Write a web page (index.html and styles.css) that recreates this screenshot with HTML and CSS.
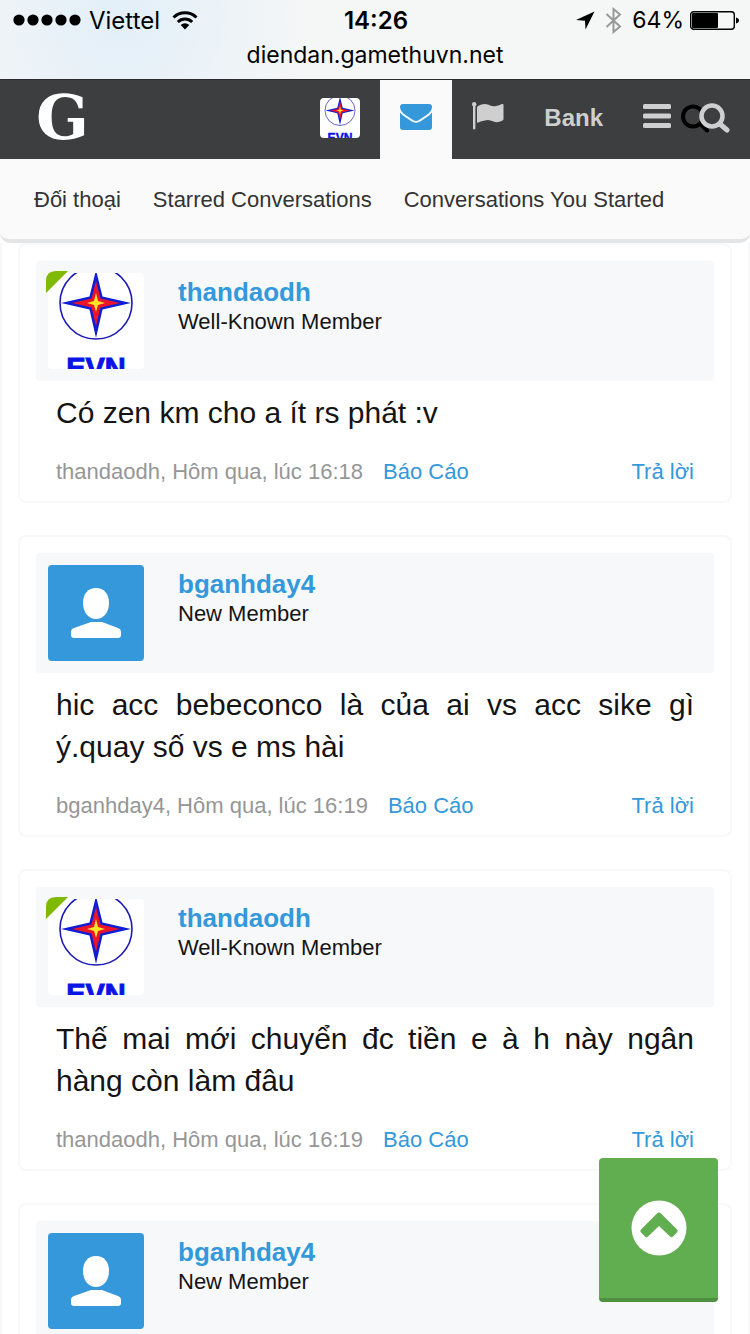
FILE: index.html
```html
<!DOCTYPE html>
<html lang="vi">
<head>
    <meta charset="UTF-8">
    <meta name="viewport" content="width=device-width, initial-scale=1.0">
    <title>Đối thoại - diendan.gamethuvn.net</title>
    <link rel="stylesheet" href="styles.css">
</head>
<body>
    <svg class="defs" aria-hidden="true">
        <symbol id="evn" viewBox="0 0 96 96">
            <rect width="96" height="96" fill="#fff"/>
            <circle cx="48" cy="30" r="36" fill="none" stroke="#1a1ab4" stroke-width="1.600"/>
            <path d="M48-3 54.500 23.500 83 30 54.500 36.500 48 65 41.500 36.500 13 30 41.500 23.500Z" fill="#0f1ed2"/>
            <path d="M48 8 52.500 25.500 72 30 52.500 34.500 48 53 43.500 34.500 24 30 43.500 25.500Z" fill="#eb1428"/>
            <path d="M48 20 50 28 57 30 50 32 48 39 46 32 39 30 46 28Z" fill="#ffe628"/>
            <text x="48" y="105" text-anchor="middle" class="evn-text">EVN</text>
        </symbol>
        <symbol id="user" viewBox="0 0 96 96">
            <rect width="96" height="96" fill="#3498db"/>
            <path d="M48 23c8 0 13 6 13 15 0 10-6 16-13 16s-13-6-13-16c0-9 5-15 13-15Z" fill="#fff"/>
            <path d="M43 57h11l16 6q3 1 3 4v3q0 3-3 3H26q-3 0-3-3v-3q0-3 3-4Z" fill="#fff"/>
        </symbol>
    </svg>

    <div class="status-bar">
        <div class="status-row">
            <div class="status-left">
                <svg width="68" height="12" viewBox="0 0 68 12"><circle cx="6" cy="6" r="5.6"/><circle cx="20" cy="6" r="5.6"/><circle cx="34" cy="6" r="5.6"/><circle cx="48" cy="6" r="5.6"/><circle cx="62" cy="6" r="5.6"/></svg>
                <span>Viettel</span>
                <svg class="wifi" width="26" height="19" viewBox="0 0 26 19"><path d="M1.5 6.5a16.5 16.5 0 0 1 23 0M5.8 11a10.3 10.3 0 0 1 14.4 0" fill="none" stroke="#000" stroke-width="3"/><path d="M13 18.500 8.700 14a6.200 6.200 0 0 1 8.600 0Z"/></svg>
            </div>
            <div class="status-time">14:26</div>
            <div class="status-right">
                <svg width="19" height="19" viewBox="0 0 19 19"><path d="M18.500.5 9.500 18.500 9 9.700 0 9Z"/></svg>
                <svg class="bluetooth" width="17" height="27" viewBox="0 0 17 27"><path d="M1.500 7 15 19.500 8.500 25V2L15 7.500 1.500 20" fill="none" stroke="#999" stroke-width="2"/></svg>
                <span>64%</span>
                <svg class="battery" width="49" height="19" viewBox="0 0 49 19"><rect x=".7" y=".7" width="43.600" height="17.600" rx="3" fill="none" stroke="#000" stroke-width="1.4"/><rect x="2" y="2" width="26" height="15" rx="1"/><path d="M46 6.500c4 1 4 5 0 6Z"/></svg>
            </div>
        </div>
        <div class="status-url">diendan.gamethuvn.net</div>
    </div>

    <nav class="navbar">
        <a href="#" class="logo">G</a>
        <a href="#" class="nav-tab" aria-label="thandaodh"><svg class="nav-avatar"><use href="#evn"/></svg></a>
        <a href="#" class="nav-tab selected" aria-label="Đối thoại">
            <svg width="32" height="26" viewBox="0 0 32 26" fill="#3498db"><path d="M3 0h26q3 0 3 3c0 3-2 5-4 7l-9 6q-3 2-6 0L4 10C2 8 0 6 0 3Q0 0 3 0Z"/><path d="M0 8.500q1 1.500 3 3l8 5.500q5 3.500 10 0l8-5.500q2-1.500 3-3V23q0 3-3 3H3q-3 0-3-3Z"/></svg>
        </a>
        <a href="#" class="nav-tab flag" aria-label="Flag">
            <svg width="32" height="28" viewBox="0 0 32 28" fill="#cfcfcf"><circle cx="2.200" cy="2.200" r="2.200"/><path d="M1 3h2.400v23.500q0 1-1.200 1T1 26.500Z"/><path d="M5 5.500q0-1 1-1.500 5-3 10-1.500 4 2.500 8 1.500 3-.5 6-2 1.500-.5 1.500 1v14q0 1-1 1.500-5 3-9 1-5-2.500-8.500-1Q9 19.200 6.500 20.500 5 21 5 20Z"/></svg>
        </a>
        <a href="#" class="nav-tab bank">Bank</a>
        <button type="button" class="menu-btn" aria-label="Menu">
            <svg width="28" height="24" viewBox="0 0 28 24" fill="#cfcfcf"><rect width="28" height="5" rx="1.500"/><rect y="9.500" width="28" height="5" rx="1.500"/><rect y="19" width="28" height="5" rx="1.500"/></svg>
        </button>
        <button type="button" class="search-btn" aria-label="Search">
            <svg width="49" height="30" viewBox="0 0 49 30" fill="none" stroke-linecap="round"><g stroke="#000" stroke-width="4"><circle cx="12" cy="13.500" r="10"/><path d="m20 21.500 6 6"/></g><circle cx="31" cy="13" r="10.500" stroke="#cfcfcf" stroke-width="4.500" fill="#3d3e40"/><path d="m39 21 7 6" stroke="#cfcfcf" stroke-width="5"/></svg>
        </button>
    </nav>

    <div class="sub-nav">
        <a href="#">Đối thoại</a>
        <a href="#">Starred Conversations</a>
        <a href="#">Conversations You Started</a>
    </div>

    <main class="messages">
        <article class="message">
            <header class="message-user">
                <div class="avatar">
                    <svg class="avatar-img"><use href="#evn"/></svg>
                    <svg class="online" width="22" height="22" viewBox="0 0 22 22"><path d="M0 22V10Q0 0 10 0H22Z" fill="#7fb900"/></svg>
                </div>
                <div class="user-info">
                    <a href="#" class="username">thandaodh</a>
                    <div class="user-title">Well-Known Member</div>
                </div>
            </header>
            <p class="message-text">Có zen km cho a ít rs phát :v</p>
            <footer class="message-meta">
                <span>thandaodh, Hôm qua, lúc 16:18</span>
                <a href="#">Báo Cáo</a>
                <a href="#" class="reply">Trả lời</a>
            </footer>
        </article>

        <article class="message">
            <header class="message-user">
                <div class="avatar">
                    <svg class="avatar-img"><use href="#user"/></svg>
                </div>
                <div class="user-info">
                    <a href="#" class="username">bganhday4</a>
                    <div class="user-title">New Member</div>
                </div>
            </header>
            <p class="message-text">hic acc bebeconco là của ai vs acc sike gì ý.quay số vs e ms hài</p>
            <footer class="message-meta">
                <span>bganhday4, Hôm qua, lúc 16:19</span>
                <a href="#">Báo Cáo</a>
                <a href="#" class="reply">Trả lời</a>
            </footer>
        </article>

        <article class="message">
            <header class="message-user">
                <div class="avatar">
                    <svg class="avatar-img"><use href="#evn"/></svg>
                    <svg class="online" width="22" height="22" viewBox="0 0 22 22"><path d="M0 22V10Q0 0 10 0H22Z" fill="#7fb900"/></svg>
                </div>
                <div class="user-info">
                    <a href="#" class="username">thandaodh</a>
                    <div class="user-title">Well-Known Member</div>
                </div>
            </header>
            <p class="message-text">Thế mai mới chuyển đc tiền e à h này ngân hàng còn làm đâu</p>
            <footer class="message-meta">
                <span>thandaodh, Hôm qua, lúc 16:19</span>
                <a href="#">Báo Cáo</a>
                <a href="#" class="reply">Trả lời</a>
            </footer>
        </article>

        <article class="message">
            <header class="message-user">
                <div class="avatar">
                    <svg class="avatar-img"><use href="#user"/></svg>
                </div>
                <div class="user-info">
                    <a href="#" class="username">bganhday4</a>
                    <div class="user-title">New Member</div>
                </div>
            </header>
        </article>
    </main>

    <button type="button" class="to-top" aria-label="Top">
        <svg width="56" height="56" viewBox="0 0 56 56"><circle cx="28" cy="28" r="27.500" fill="#fff"/><path d="M26 13.500q2-2 4 0L46 29.500q1.500 1.500 0 3L42 36.500q-1.500 1.500-3 0L28 26 17 36.500q-1.500 1.500-3 0L10 32.500q-1.500-1.500 0-3Z" fill="#61ae50"/></svg>
    </button>
</body>
</html>
```
FILE: styles.css
```css
* {
    box-sizing: border-box;
}

body {
    margin: 0;
    height: 100vh;
    overflow: hidden;
    display: flex;
    flex-direction: column;
    background-color: #ffffff;
    color: #141414;
    font-family: "Liberation Sans", Arial, sans-serif;
    font-size: 22px;
}

a {
    color: #3498db;
    text-decoration: none;
}

button {
    border: none;
    padding: 0;
    background: none;
    cursor: pointer;
}

svg {
    display: block;
    flex-shrink: 0;
}

.defs {
    position: absolute;
    width: 0;
    height: 0;
}

.evn-text {
    font-family: "Liberation Sans", Arial, sans-serif;
    font-size: 29px;
    font-weight: bold;
    fill: #0a14e6;
    stroke: #0a14e6;
    stroke-width: 1px;
}

/* Status bar */
.status-bar {
    flex-shrink: 0;
    height: 80px;
    border-bottom: 1px solid #2b2b2d;
    background: radial-gradient(circle at 16% 20%, #e2eff9, #f5f6f6 30%);
    color: #000000;
    font-family: Inter, "Liberation Sans", sans-serif;
    font-size: 24px;
}

.status-row {
    display: grid;
    grid-template-columns: 1fr auto 1fr;
    align-items: center;
    height: 40px;
    padding: 0 11px 0 13px;
}

.status-left,
.status-right {
    display: flex;
    align-items: center;
    gap: 8px;
}

.status-right {
    justify-content: flex-end;
    gap: 6px;
}

.wifi {
    margin-left: 4px;
}

.bluetooth {
    margin: 0 4px;
}

.status-right span {
    font-size: 23px;
}

.status-time {
    font-weight: 600;
}

.status-url {
    text-align: center;
    font-size: 23px;
    line-height: 30px;
}

/* Navbar */
.navbar {
    flex-shrink: 0;
    display: flex;
    height: 79px;
    padding-right: 20px;
    background-color: #3d3e40;
}

.logo {
    margin-right: auto;
    padding-left: 36px;
    color: #ffffff;
    font-family: "DejaVu Serif", serif;
    font-size: 62px;
    font-weight: bold;
    line-height: 75px;
}

.nav-tab,
.menu-btn,
.search-btn {
    display: flex;
    align-items: center;
    padding: 0 20px 4px;
}

.nav-tab {
    color: #cfcfcf;
}

.nav-tab.selected {
    padding-bottom: 6px;
    background-color: #fafafa;
}

.nav-tab.flag {
    padding-bottom: 8px;
}

.nav-tab.bank {
    font-size: 24px;
    font-weight: bold;
}

.nav-avatar {
    width: 40px;
    height: 40px;
    border-radius: 4px;
}

.menu-btn {
    padding: 0 10px 8px 20px;
}

.search-btn {
    padding: 0;
    padding-bottom: 4px;
}

/* Sub navigation */
.sub-nav {
    flex-shrink: 0;
    display: flex;
    align-items: center;
    gap: 32px;
    height: 84px;
    padding: 2px 34px 0;
    border-bottom: 4px solid #e4e5e6;
    border-radius: 0 0 10px 10px;
    background-color: #fafafa;
}

.sub-nav a {
    color: #333333;
}

/* Messages */
.messages {
    flex: 1;
    min-height: 0;
    padding: 0 16px;
    border: solid #f7f8f9;
    border-width: 0 2px;
}

.message {
    margin-bottom: 32px;
    padding: 16px;
    border: 2px solid #f7f8f9;
    border-radius: 8px;
}

.message-user {
    display: flex;
    gap: 34px;
    padding: 12px;
    border-radius: 4px;
    background-color: #f7f8fa;
}

.avatar {
    position: relative;
}

.avatar-img {
    width: 96px;
    height: 96px;
    border-radius: 4px;
}

.online {
    position: absolute;
    top: -2px;
    left: -2px;
}

.user-info {
    padding-top: 4px;
}

.username {
    display: block;
    font-size: 26px;
    font-weight: bold;
    line-height: 30px;
}

.user-title {
    line-height: 30px;
}

.message-text {
    margin: 11px 20px 25px;
    font-size: 30px;
    line-height: 42px;
    text-align: justify;
}

.message-meta {
    display: flex;
    gap: 20px;
    margin: 0 20px;
    color: #969696;
    line-height: 26px;
}

.reply {
    margin-left: auto;
}

/* Back to top */
.to-top {
    position: fixed;
    right: 32px;
    bottom: 32px;
    display: flex;
    align-items: center;
    justify-content: center;
    width: 119px;
    height: 144px;
    border-bottom: 4px solid #4e8f40;
    border-radius: 4px;
    background-color: #61ae50;
}
```
